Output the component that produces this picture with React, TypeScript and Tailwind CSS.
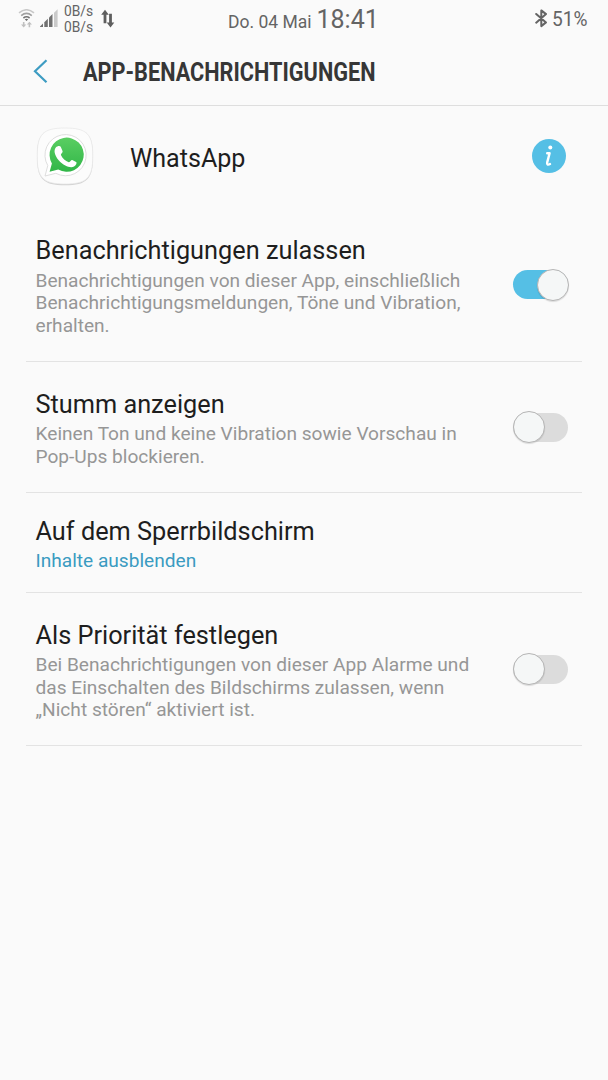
import type { ReactNode } from 'react';

function Toggle({ on = false }: { on?: boolean }) {
  return (
    <div
      role="switch"
      aria-checked={on}
      className={`flex h-[29px] w-[55px] shrink-0 items-center rounded-full ${on ? 'justify-end bg-[#55bfe5]' : 'justify-start bg-[#dcdcdc]'}`}
    >
      <span
        className={`h-8 w-8 shrink-0 rounded-full border border-[#b5b5b5] bg-[#f5f7f7] shadow-[0_1px_1px_rgba(0,0,0,0.12)] ${on ? '-mr-px' : ''}`}
      />
    </div>
  );
}

function Row({
  title,
  lines,
  className,
  accent = false,
  control,
}: {
  title: string;
  lines: string[];
  className: string;
  accent?: boolean;
  control?: ReactNode;
}) {
  return (
    <section className={`mx-[26px] flex items-start justify-between border-b border-[#e3e3e3] pl-[9.5px] pr-[14px] ${className}`}>
      <div className="whitespace-nowrap">
        <h2 className="text-[25.3px] leading-[30px] text-[#1e1e1e]">{title}</h2>
        <div className={`mt-[3.5px] text-[19.12px] leading-[22.5px] ${accent ? 'text-[#3a9bc1]' : 'text-[#969696]'}`}>
          {lines.map((line) => (
            <p key={line}>{line}</p>
          ))}
        </div>
      </div>
      {control}
    </section>
  );
}

function WifiIcon() {
  return (
    <svg className="mt-[9px] h-[19px] w-[17px]" viewBox="0 0 17 19" fill="none">
      <path d="M1 3.8Q8.5-2.2 16 3.8" stroke="#c8c8c8" strokeWidth="1.6" />
      <path d="M3.2 6.6Q8.5 2.2 13.8 6.6" stroke="#a0a0a0" strokeWidth="1.6" />
      <path d="M5.4 9Q8.5 6.6 11.6 9" stroke="#747474" strokeWidth="1.6" />
      <path d="M6.8 10.3Q8.5 9.2 10.2 10.3L8.5 12Z" fill="#666" />
      <path d="M4.9 13h1.6v2.6h1.8L5.7 18.4 3 15.6h1.9ZM10.6 18.2h1.6v-2.6h1.8L11.4 12.8 8.8 15.6h1.8Z" fill="#c0c0c0" />
    </svg>
  );
}

function SignalIcon() {
  return (
    <svg className="ml-[5px] mt-[9px] h-[19px] w-[18px]" viewBox="0 0 18 19">
      <path d="M0 18v-.6l3-3V18Z" fill="#707070" />
      <path d="M4.3 18v-4.8l3.5-3.4V18Z" fill="#707070" />
      <path d="M9 18V8.5L12.5 5V18Z" fill="#707070" />
      <path d="M14 18V3.8L17.6.3V18Z" fill="#cacaca" />
    </svg>
  );
}

function WhatsAppIcon() {
  return (
    <svg className="-mt-[2px] h-[60px] w-[60px]" viewBox="0 0 60 60">
      <defs>
        <linearGradient id="bubble" x1="0" y1="0" x2="0" y2="1">
          <stop offset="0" stopColor="#5ace62" />
          <stop offset="1" stopColor="#31b648" />
        </linearGradient>
      </defs>
      <path d="M30 2.5C52 2.5 58 8 58 30.5S52 59.3 30 59.3 2 53 2 30.5 8 2.5 30 2.5Z" fill="#d2d2d2" />
      <path d="M30 2C52 2 57.8 8 57.8 30S52 58 30 58 2.2 52 2.2 30 8 2 30 2Z" fill="#fcfcfc" stroke="#e6e6e6" strokeWidth=".7" />
      <path d="M10 50L12.8 39.6A20.6 20.6 0 1 1 20.8 47.3Z" fill="#fff" stroke="#dadada" strokeWidth=".9" />
      <path d="M14.6 45.8L16.9 37.4A17.1 17.1 0 1 1 23.2 43.6Z" fill="url(#bubble)" />
      <path transform="translate(-3.1 -2.7) scale(1.13)" d="M21.3 21.3c1-1.3 3.6-1.8 4.2-.5l1.7 4c.3.9-1.8 2.5-1.5 3.2 1.4 3 3.9 5.3 6.9 6.5.8.2 2.2-2.4 3.1-2l3.4 1.8c1 .5-.1 3.2-1.8 4-3.6 1.6-9.1-.9-12.4-4.2-3-3-6.9-8.9-3.6-12.8Z" fill="#fff" />
    </svg>
  );
}

export default function App() {
  return (
    <main className="h-[1080px] w-[608px] overflow-hidden bg-[#fafafa] font-['Roboto',sans-serif]">
      <div className="flex h-[38px] items-start whitespace-nowrap pl-[18px] text-[#646464]">
        <WifiIcon />
        <SignalIcon />
        <div className="ml-[6px] mt-[4px] w-[30px] text-[13.8px] leading-[15.5px]">
          <p>0B/s</p>
          <p>0B/s</p>
        </div>
        <svg className="ml-[7px] mt-[9px] h-[20px] w-[14px]" viewBox="0 0 14 20" fill="#5e5e5e">
          <path d="M4 .8L7.8 5.7H5.4V14.3H2.6V5.7H.2Z" />
          <path d="M9.5 18.5L5.7 13.6H8.1V4.7H10.9V13.6H13.3Z" />
        </svg>
        <div className="ml-[113px] mt-px flex w-[150px] items-baseline">
          <span className="text-[17.5px] leading-[38px]">Do. 04 Mai</span>
          <span className="ml-[5px] text-[25px] leading-[38px]">18:41</span>
        </div>
        <svg className="ml-[157px] mt-[9px] h-[19px] w-[13px]" viewBox="0 0 13 19" fill="none" stroke="#646464" strokeWidth="2" strokeLinecap="round" strokeLinejoin="round">
          <path d="M1.2 5l9.8 8.4-4.7 3.7V1.4L11 5.1 1.2 13.7" />
        </svg>
        <span className="ml-[3.5px] origin-left scale-x-[0.91] text-[21px] leading-[39px]">51%</span>
      </div>

      <header className="flex h-[68px] items-center border-b border-[#dedede] pl-[33px]">
        <svg className="-mt-[2px] h-[24px] w-[15px]" viewBox="0 0 15 24" fill="none" stroke="#3d9cc2" strokeWidth="2.2">
          <path d="M13.5 1.2L2 12.2l11.5 11" />
        </svg>
        <h1 className="ml-[35px] mt-[2px] origin-left scale-x-[0.868] whitespace-nowrap text-[25px] font-bold leading-[30px] text-[#363636]">
          APP-BENACHRICHTIGUNGEN
        </h1>
      </header>

      <div className="flex h-[102px] items-center pl-[35px] pr-[42px]">
        <WhatsAppIcon />
        <span className="ml-[35px] mt-[3px] text-[25.1px] leading-[30px] text-[#1e1e1e]">WhatsApp</span>
        <svg className="-mt-[2px] ml-auto h-[34px] w-[34px]" viewBox="0 0 34 34">
          <circle cx="17" cy="17" r="17" fill="#55bfe5" />
          <circle cx="18.3" cy="8.6" r="2" fill="#fff" />
          <path d="M15.2 14.2h2.4l-2.4 9.2c-.5 2.2.6 2.9 2.8 1.6" fill="none" stroke="#fff" strokeWidth="2.4" strokeLinecap="round" strokeLinejoin="round" />
        </svg>
      </div>

      <Row
        title="Benachrichtigungen zulassen"
        lines={['Benachrichtigungen von dieser App, einschließlich', 'Benachrichtigungsmeldungen, Töne und Vibration,', 'erhalten.']}
        className="h-[154px] pt-[28px]"
        control={<div className="mt-[34px]"><Toggle on /></div>}
      />
      <Row
        title="Stumm anzeigen"
        lines={['Keinen Ton und keine Vibration sowie Vorschau in', 'Pop-Ups blockieren.']}
        className="h-[131px] pt-[27.5px]"
        control={<div className="mt-[23px]"><Toggle /></div>}
      />
      <Row title="Auf dem Sperrbildschirm" lines={['Inhalte ausblenden']} accent className="h-[100px] pt-[23.5px]" />
      <Row
        title="Als Priorität festlegen"
        lines={['Bei Benachrichtigungen von dieser App Alarme und', 'das Einschalten des Bildschirms zulassen, wenn', '„Nicht stören“ aktiviert ist.']}
        className="h-[153px] pt-[27.5px]"
        control={<div className="mt-[34px]"><Toggle /></div>}
      />
    </main>
  );
}
